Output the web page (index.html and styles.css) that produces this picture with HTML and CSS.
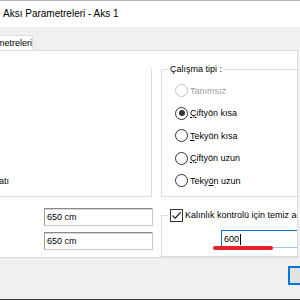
FILE: index.html
```html
<!DOCTYPE html>
<html lang="tr">
<head>
    <meta charset="UTF-8">
    <meta name="viewport" content="width=device-width, initial-scale=1.0">
    <title>Aksı Parametreleri - Aks 1</title>
    <link rel="stylesheet" href="styles.css">
</head>
<body>
    <div class="dialog">
        <div class="titlebar">Aksı Parametreleri - Aks 1</div>

        <div class="tabstrip">
            <div class="tab">metreleri</div>
        </div>

        <div class="panel">
            <div class="groups">
                <div class="group-left">
                    <span class="cut-text">atı</span>
                </div>

                <fieldset class="group group-type">
                    <legend>Çalışma tipi :</legend>
                    <div class="option disabled"><span class="radio"></span><span>Tanımsız</span></div>
                    <div class="option"><span class="radio checked"><span class="dot"></span></span><span><u>Ç</u>iftyön kısa</span></div>
                    <div class="option"><span class="radio"></span><span><u>T</u>ekyön kısa</span></div>
                    <div class="option"><span class="radio"></span><span><u>Ç</u>iftyön uzun</span></div>
                    <div class="option"><span class="radio"></span><span>Teky<u>ö</u>n uzun</span></div>
                </fieldset>
            </div>

            <div class="bottom-row">
                <div class="sizes">
                    <div class="field">650 cm</div>
                    <div class="field">650 cm</div>
                </div>

                <fieldset class="group group-thick">
                    <legend>
                        <span class="check">
                            <svg width="11" height="11" viewBox="0 0 11 11"><polyline points="1.5,5.5 4.2,8.3 9.6,2.2" fill="none" stroke="#333" stroke-width="1.3"/></svg>
                        </span>
                        <span>Kalınlık kontrolü için temiz açıklık</span>
                    </legend>
                    <div class="field-wrap">
                        <div class="field field-focus">600<span class="caret"></span></div>
                        <span class="mark"></span>
                    </div>
                </fieldset>
            </div>
        </div>

        <div class="footer">
            <div class="btn"></div>
        </div>
    </div>
</body>
</html>
```

FILE: styles.css
```css
:root {
    --line-color: #dcdcdc;
    --face-color: #f0f0f0;
    --focus-color: #0078d7;
}

body {
    margin: 0;
    width: 300px;
    height: 300px;
    overflow: hidden;
    background: var(--face-color);
    font-family: 'Liberation Sans', Arial, sans-serif;
    font-size: 9px;
    color: #000;
}

.dialog {
    height: 300px;
    border-top: 1px solid #b4b4b4;
    box-sizing: border-box;
    display: flex;
    flex-direction: column;
}

.titlebar {
    height: 26px;
    line-height: 26px;
    padding-left: 3px;
    background: #fff;
    font-size: 10px;
    white-space: nowrap;
}

.tabstrip {
    height: 24px;
    display: flex;
    align-items: flex-end;
}

.tab {
    height: 14px;
    line-height: 14px;
    width: 35px;
    margin-left: -3px;
    background: #fff;
    border: 1px solid var(--line-color);
    border-bottom: none;
    border-left: none;
    overflow: hidden;
    white-space: nowrap;
}

.panel {
    height: 214px;
    box-sizing: border-box;
    margin-right: 2px;
    background: #fff;
    border-top: 1px solid var(--line-color);
    border-right: 1px solid var(--line-color);
    border-bottom: 1px solid var(--line-color);
    overflow: hidden;
}

.groups,
.bottom-row {
    display: grid;
    grid-template-columns: 152px 1fr;
    column-gap: 9px;
}

.groups {
    margin-top: 12px;
    height: 134px;
}

.group-left {
    align-self: end;
    height: 128px;
    box-sizing: border-box;
    border-right: 1px solid var(--line-color);
    border-bottom: 1px solid var(--line-color);
    display: flex;
    align-items: flex-end;
    padding-bottom: 10px;
}

.cut-text {
    margin-left: -1px;
}

.group {
    margin: 0;
    width: 200px;
    box-sizing: border-box;
    border: 1px solid var(--line-color);
    padding: 0 0 0 6px;
    min-inline-size: 0;
}

.group legend {
    padding: 0 2px;
    line-height: 12px;
    white-space: nowrap;
}

.group-type {
    height: 134px;
    padding-top: 4px;
}

.option {
    height: 22.5px;
    display: flex;
    align-items: center;
    gap: 2px;
    padding-left: 7px;
    white-space: nowrap;
}

.option u {
    text-decoration-thickness: 1px;
    text-underline-offset: 1px;
}

.radio {
    width: 13px;
    height: 13px;
    box-sizing: border-box;
    border: 1px solid #333;
    border-radius: 50%;
    background: #fff;
    display: flex;
    align-items: center;
    justify-content: center;
}

.dot {
    width: 6px;
    height: 6px;
    border-radius: 50%;
    background: #333;
}

.disabled {
    color: #a0a0a0;
}

.disabled .radio {
    border-color: #c4c4c4;
}

.sizes {
    display: flex;
    flex-direction: column;
    gap: 6px;
    padding: 11px 0 0 44px;
}

.field {
    height: 18px;
    width: 109px;
    box-sizing: border-box;
    border: 1px solid #c8c8c8;
    border-top-color: #8c8c8c;
    border-left-color: #9a9a9a;
    box-shadow: inset 0 1px 0 #d6d6d6;
    padding-left: 2px;
    line-height: 16px;
    background: #fff;
    white-space: nowrap;
}

.group-thick {
    margin-top: 12px;
    height: 48px;
}

.group-thick legend {
    display: flex;
    align-items: center;
    gap: 2px;
    line-height: 13px;
}

.check {
    width: 13px;
    height: 13px;
    box-sizing: border-box;
    border: 1px solid #333;
    background: #fff;
    display: flex;
    align-items: center;
    justify-content: center;
}

.field-wrap {
    position: relative;
    margin: 8px 0 0 53px;
}

.field-focus {
    width: 100px;
    border-color: var(--focus-color);
    border-bottom-color: #9cc8ee;
    box-shadow: none;
    display: flex;
    align-items: center;
}

.caret {
    width: 1px;
    height: 11px;
    background: #000;
    margin-left: 1px;
}

/* red hand-drawn underline over the value */
.mark {
    position: absolute;
    left: -8px;
    top: 16px;
    width: 60px;
    height: 4px;
    border-radius: 3px;
    background: #e8202a;
}

.footer {
    height: 34px;
    border-bottom: 1px solid #3c3c3c;
    display: flex;
    align-items: flex-start;
    padding: 8px 0 0 288px;
}

.btn {
    width: 40px;
    height: 19px;
    flex-shrink: 0;
    box-sizing: border-box;
    border: 2px solid var(--focus-color);
    background: #e1e1e1;
}
```
